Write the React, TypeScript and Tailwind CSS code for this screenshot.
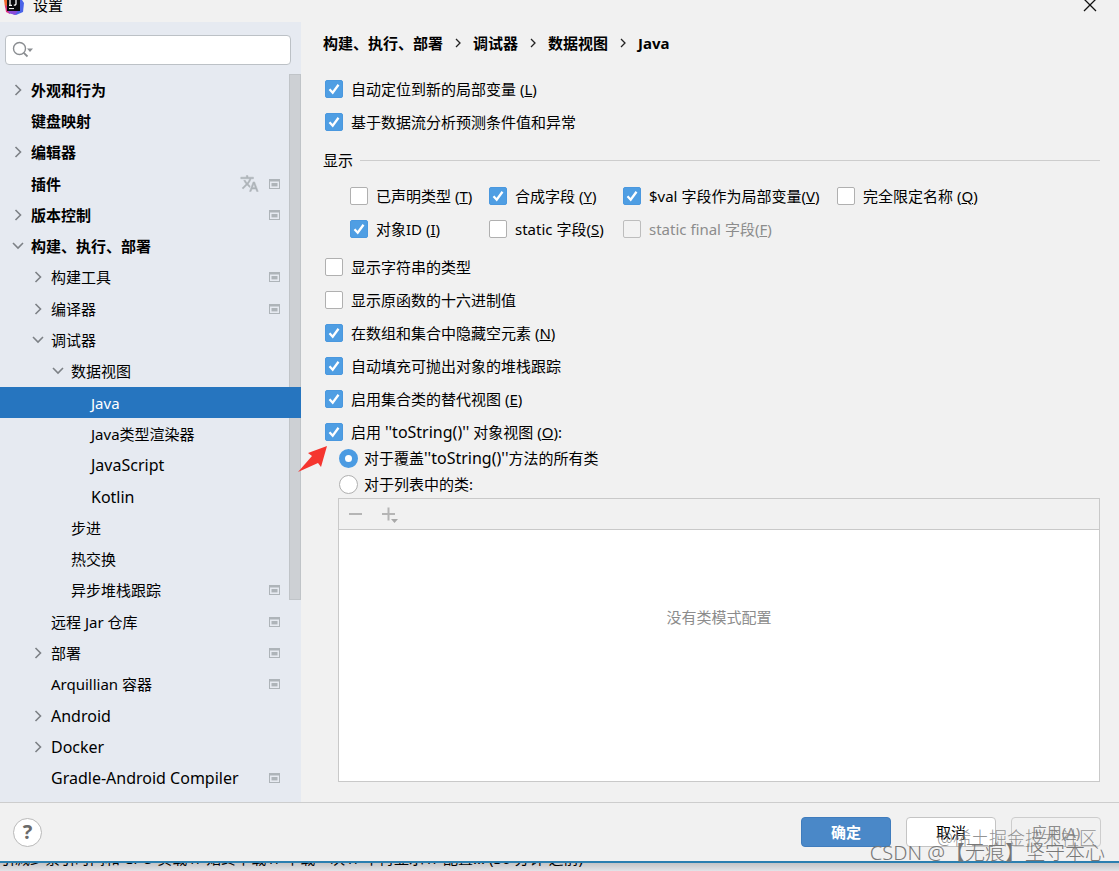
import React, { useState } from "react";

type TreeItem = {
  label: string;
  level: number;
  arrow?: "open" | "closed";
  bold?: boolean;
  latin?: boolean;
  project?: boolean;
  translate?: boolean;
};

const treeItems: TreeItem[] = [
  { label: "外观和行为", level: 0, arrow: "closed", bold: true },
  { label: "键盘映射", level: 0, bold: true },
  { label: "编辑器", level: 0, arrow: "closed", bold: true },
  { label: "插件", level: 0, bold: true, project: true, translate: true },
  { label: "版本控制", level: 0, arrow: "closed", bold: true, project: true },
  { label: "构建、执行、部署", level: 0, arrow: "open", bold: true },
  { label: "构建工具", level: 1, arrow: "closed", project: true },
  { label: "编译器", level: 1, arrow: "closed", project: true },
  { label: "调试器", level: 1, arrow: "open" },
  { label: "数据视图", level: 2, arrow: "open" },
  { label: "Java", level: 3 },
  { label: "Java类型渲染器", level: 3 },
  { label: "JavaScript", level: 3, latin: true },
  { label: "Kotlin", level: 3, latin: true },
  { label: "步进", level: 2 },
  { label: "热交换", level: 2 },
  { label: "异步堆栈跟踪", level: 2, project: true },
  { label: "远程 Jar 仓库", level: 1, project: true },
  { label: "部署", level: 1, arrow: "closed", project: true },
  { label: "Arquillian 容器", level: 1, project: true },
  { label: "Android", level: 1, arrow: "closed", latin: true },
  { label: "Docker", level: 1, arrow: "closed", latin: true },
  { label: "Gradle-Android Compiler", level: 1, latin: true, project: true },
];

const indents = ["pl-[12px]", "pl-[32px]", "pl-[52px]", "pl-[72px]"];

const breadcrumbs = ["构建、执行、部署", "调试器", "数据视图", "Java"];

const AppLogo = () => (
  <svg width="20" height="15" viewBox="0 0 20 15" aria-hidden="true">
    <path d="M0 0h8v12l-4-1-3-4z" fill="#f4662f" />
    <path d="M1 5l5 3v6l-4-2z" fill="#e0317f" />
    <path d="M10 0h8l2 3-1 9-7 3-7-2z" fill="#4a63e8" />
    <path d="M4 11h10l-3 4-6-2z" fill="#8a4bd8" />
    <rect x="3" y="0" width="13" height="11" fill="#0b0b0d" />
    <path
      d="M6 0v5M5 5.3h3M12 0v3.8q0 1.5-2.2 1.4"
      stroke="#fff"
      strokeWidth="1.3"
      fill="none"
    />
    <path d="M5 8.6h5" stroke="#fff" strokeWidth="1" />
  </svg>
);

const TreeArrow = ({ open }: { open: boolean }) => (
  <svg width="12" height="12" viewBox="0 0 12 12" aria-hidden="true">
    <path
      d={open ? "M1 3l5 5 5-5" : "M3.5 1l5 5-5 5"}
      fill="none"
      stroke="#7d8186"
      strokeWidth="1.6"
    />
  </svg>
);

const ProjectIcon = () => (
  <svg width="12" height="12" viewBox="0 0 12 12" aria-hidden="true">
    <path
      d="M0 1h11v10H0zM1 3.4v6.600h9V3.400z"
      fill="#aeb4b9"
      fillRule="evenodd"
    />
    <rect x="2.500" y="5" width="6" height="3.400" fill="#aeb4b9" />
  </svg>
);

const TranslateIcon = () => (
  <svg width="19" height="19" viewBox="0 0 24 24" aria-hidden="true">
    <path
      fill="#aeb4b9"
      stroke="#aeb4b9"
      strokeWidth="0.600"
      d="M12.870 15.070l-2.540-2.510.030-.030c1.740-1.940 2.980-4.170 3.710-6.530H17V4h-7V2H8v2H1v1.990h11.170C11.500 7.920 10.440 9.750 9 11.350 8.070 10.320 7.300 9.190 6.690 8h-2c.730 1.630 1.730 3.170 2.980 4.560l-5.090 5.020L4 19l5-5 3.110 3.110.760-2.040zM18.500 10h-2L12 22h2l1.120-3h4.750L21 22h2l-4.500-12zm-2.620 7l1.620-4.330L19.120 17h-3.240z"
    />
  </svg>
);

type CheckProps = {
  children: React.ReactNode;
  checked?: boolean;
  disabled?: boolean;
};

const Check = ({ children, checked = false, disabled = false }: CheckProps) => (
  <label
    className={`flex h-[33px] w-fit items-center gap-2 whitespace-nowrap ${disabled ? "text-[#8c8c8c]" : ""}`}
  >
    <span className="grid size-[18px]">
      <input
        type="checkbox"
        defaultChecked={checked}
        disabled={disabled}
        className="peer col-start-1 row-start-1 size-[18px] appearance-none rounded-[2px] border border-[#b0b0b0] bg-white checked:border-[#4a98df] checked:bg-[#4f9ee3] disabled:border-[#bdbdbd] disabled:bg-[#f2f2f2]"
      />
      <svg
        viewBox="0 0 18 18"
        aria-hidden="true"
        className="pointer-events-none col-start-1 row-start-1 hidden size-[18px] peer-checked:block"
      >
        <path
          d="M4.500 9.300l3.200 3.400 5.800-8"
          fill="none"
          stroke="#fff"
          strokeWidth="2.300"
        />
      </svg>
    </span>
    <span>{children}</span>
  </label>
);

type RadioProps = {
  children: React.ReactNode;
  checked?: boolean;
};

const Radio = ({ children, checked = false }: RadioProps) => (
  <label className="flex h-5 w-fit items-center gap-[6px] whitespace-nowrap">
    <input
      type="radio"
      name="toStringClasses"
      defaultChecked={checked}
      className="size-[19px] appearance-none rounded-full border border-[#b0b0b0] bg-white checked:border-[6px] checked:border-[#4b9be2]"
    />
    <span>{children}</span>
  </label>
);

const Sidebar = () => {
  const [selected, setSelected] = useState("Java");

  return (
    <aside className="flex w-[301px] shrink-0 flex-col bg-[#e6eaf1] pt-[13px] pb-2">
      <div className="mr-[10px] ml-[5px] flex h-[30px] items-center rounded-[4px] border border-[#bcc1c6] bg-white pl-[6px]">
        <svg width="22" height="18" viewBox="0 0 22 18" aria-hidden="true">
          <circle cx="7.500" cy="7.500" r="6" fill="none" stroke="#8a8d91" strokeWidth="1.400" />
          <path d="M11.800 11.800l3.700 3.700" stroke="#8a8d91" strokeWidth="1.800" />
          <path d="M15 7.500h6l-3 3.500z" fill="#8a8d91" />
        </svg>
        <input
          type="text"
          aria-label="搜索设置"
          className="min-w-0 flex-1 bg-transparent px-1 outline-none"
        />
      </div>

      <nav className="relative mt-[9px] flex flex-1 flex-col">
        <div className="absolute top-0 right-0 h-[73%] w-3 border border-[#c0c4c8] bg-[#cdd0d4]" />
        {treeItems.map((item) => (
          <button
            key={item.label}
            type="button"
            onClick={() => setSelected(item.label)}
            className={`relative flex min-h-[31px] flex-1 items-center pr-5 text-left whitespace-nowrap ${indents[item.level]} ${item.bold ? "font-bold" : ""} ${item.latin ? "text-[16px]" : ""} ${selected === item.label ? "bg-[#2675bf] text-white" : ""}`}
          >
            <span className="w-[19px] shrink-0">
              {item.arrow && <TreeArrow open={item.arrow === "open"} />}
            </span>
            <span className="flex-1">{item.label}</span>
            <span className="flex items-center gap-[10px]">
              {item.translate && <TranslateIcon />}
              {item.project && <ProjectIcon />}
            </span>
          </button>
        ))}
      </nav>
    </aside>
  );
};

const Main = () => (
  <main className="flex min-w-0 flex-1 flex-col pt-[10px] pr-[19px] pb-5 pl-[22px]">
    <div className="flex h-[22px] items-center gap-3 font-bold">
      {breadcrumbs.map((crumb, i) => (
        <React.Fragment key={crumb}>
          {i > 0 && (
            <svg width="6" height="10" viewBox="0 0 6 10" aria-hidden="true">
              <path d="M1 1l4 4-4 4" fill="none" stroke="#222" strokeWidth="1.300" />
            </svg>
          )}
          <span>{crumb}</span>
        </React.Fragment>
      ))}
    </div>

    <div className="mt-[18px] pl-[2px]">
      <Check checked>
        自动定位到新的局部变量 (<u>L</u>)
      </Check>
      <Check checked>基于数据流分析预测条件值和异常</Check>
    </div>

    <div className="mt-[11px] flex h-[22px] items-center gap-[7px]">
      <span>显示</span>
      <span className="h-px flex-1 bg-[#cdcdcd]" />
    </div>

    <div className="mt-2 grid grid-cols-[139px_134px_214px_auto] pl-[27px]">
      <Check>
        已声明类型 (<u>T</u>)
      </Check>
      <Check checked>
        合成字段 (<u>Y</u>)
      </Check>
      <Check checked>
        $val 字段作为局部变量(<u>V</u>)
      </Check>
      <Check>
        完全限定名称 (<u>Q</u>)
      </Check>
      <Check checked>
        对象ID (<u>I</u>)
      </Check>
      <Check>
        static 字段(<u>S</u>)
      </Check>
      <Check disabled>
        static final 字段(<u>F</u>)
      </Check>
    </div>

    <div className="mt-[5px] pl-[2px]">
      <Check>显示字符串的类型</Check>
      <Check>显示原函数的十六进制值</Check>
      <Check checked>
        在数组和集合中隐藏空元素 (<u>N</u>)
      </Check>
      <Check checked>自动填充可抛出对象的堆栈跟踪</Check>
      <Check checked>
        启用集合类的替代视图 (<u>E</u>)
      </Check>
      <div className="relative w-fit">
        <Check checked>
          启用 <span className="text-[16px]">''toString()''</span> 对象视图 (<u>O</u>):
        </Check>
        {/* pointer to the toString option */}
        <svg
          width="30"
          height="27"
          viewBox="0 0 30 27"
          aria-hidden="true"
          className="absolute top-[31px] -left-[27px]"
        >
          <path d="M29 0L10 7l4 3L0 26l20-9 3 4z" fill="#f5352f" />
        </svg>
      </div>
    </div>

    <div className="flex flex-col gap-[6px] pl-4">
      <Radio checked>
        对于覆盖<span className="text-[16px]">''toString()''</span>方法的所有类
      </Radio>
      <Radio>对于列表中的类:</Radio>
    </div>

    <section className="mt-1 ml-[15px] flex flex-1 flex-col border border-[#c9c9c9] bg-white">
      <div className="flex h-[31px] items-center gap-[18px] border-b border-[#c9c9c9] bg-[#f1f1f1] pl-[9px]">
        <button type="button" aria-label="移除">
          <svg width="15" height="18" viewBox="0 0 15 18" aria-hidden="true">
            <path d="M1 9h13" stroke="#b5b5b5" strokeWidth="2" />
          </svg>
        </button>
        <button type="button" aria-label="添加">
          <svg width="18" height="18" viewBox="0 0 18 18" aria-hidden="true">
            <path d="M1 9h13M7.500 2.500v13" stroke="#b5b5b5" strokeWidth="2" />
            <path d="M10 14h7l-3.500 4z" fill="#a8a8a8" />
          </svg>
        </button>
      </div>
      <div className="flex flex-1 flex-col items-center text-[#8c8c8c]">
        <span className="flex-1" />
        <p>没有类模式配置</p>
        <span className="flex-2" />
      </div>
    </section>
  </main>
);

const Footer = () => (
  <footer className="flex h-[59px] items-center border-t border-[#cdcdcd] pr-[18px] pl-[13px]">
    <button
      type="button"
      className="size-[29px] rounded-full border border-[#b9b9b9] bg-white text-[20px] leading-[26px] font-bold text-[#6a6a6a]"
    >
      ?
    </button>
    <div className="ml-auto flex gap-[15px]">
      <button
        type="button"
        className="h-[30px] w-[90px] rounded-[4px] border border-[#3f7cbd] bg-[#4a88c8] font-bold text-white"
      >
        确定
      </button>
      <button
        type="button"
        className="h-[30px] w-[90px] rounded-[4px] border border-[#c4c4c4] bg-white"
      >
        取消
      </button>
      <button
        type="button"
        disabled
        className="h-[30px] w-[90px] rounded-[4px] border border-[#cdcdcd] bg-[#f1f1f1] text-[#8c8c8c]"
      >
        应用(<u>A</u>)
      </button>
    </div>
  </footer>
);

const App = () => {
  return (
    <div className="relative flex min-h-screen flex-col overflow-hidden bg-[#f1f1f1] font-['Noto_Sans','Noto_Sans_CJK_SC',sans-serif] text-[15px] leading-[22px] text-black">
      <header className="flex h-[22px] items-start overflow-hidden pr-[22px] pl-[4px]">
        <AppLogo />
        <span className="ml-[9px] leading-[11px]">设置</span>
        <button type="button" aria-label="关闭" className="ml-auto">
          <svg width="14" height="12" viewBox="0 0 14 12" aria-hidden="true">
            <path d="M1 -1l12 12M13 -1L1 11" stroke="#111" strokeWidth="1.300" />
          </svg>
        </button>
      </header>

      <div className="flex flex-1">
        <Sidebar />
        <Main />
      </div>
      <Footer />

      {/* status bar of the window behind */}
      <div className="flex h-[10px] items-start overflow-hidden border-t-2 border-[#2b7fb0] bg-linear-to-b from-[#c4c4c6] to-[#e2e4e8]">
        <div className="flex h-[6px] w-[583px] items-end justify-end overflow-hidden whitespace-nowrap">
          <span>
            使用预构建共享索引减少索引时间和 CPU 负载 // 始终下载 // 下载一次 // 不再显示 // 配置... (36 分钟 之前)
          </span>
        </div>
      </div>

      <p className="pointer-events-none absolute right-[22px] bottom-[22px] text-[18px] font-light text-[#777]/80">
        @稀土掘金技术社区
      </p>
      <p className="pointer-events-none absolute right-[14px] bottom-[7px] text-[20px] font-light text-[#777]">
        CSDN @【无痕】坚守本心
      </p>
    </div>
  );
};

export default App;
